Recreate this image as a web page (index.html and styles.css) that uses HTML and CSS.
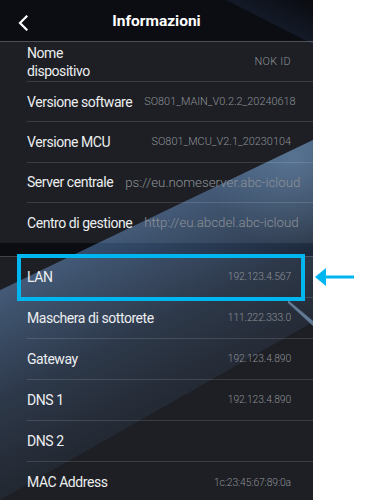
FILE: index.html
```html
<!DOCTYPE html>
<html lang="it">
<head>
    <meta charset="UTF-8">
    <meta name="viewport" content="width=device-width, initial-scale=1.0">
    <title>Informazioni</title>
    <link rel="stylesheet" href="styles.css">
</head>
<body>
    <div class="screen">
        <header class="topbar">
            <svg class="back" width="10" height="16" viewBox="0 0 10 16" aria-hidden="true">
                <polyline points="8.5,1.5 2,8 8.5,14.5" fill="none" stroke="#fff" stroke-width="2.2" stroke-linecap="square"/>
            </svg>
            <h1>Informazioni</h1>
        </header>

        <section class="group">
            <div class="row">
                <span class="label">Nome<br>dispositivo</span>
                <span class="value value-wide">NOK ID</span>
            </div>
            <div class="row">
                <span class="label">Versione software</span>
                <span class="value">SO801_MAIN_V0.2.2_20240618</span>
            </div>
            <div class="row">
                <span class="label">Versione MCU</span>
                <span class="value">SO801_MCU_V2.1_20230104</span>
            </div>
            <div class="row">
                <span class="label">Server centrale</span>
                <span class="value value-url">ps://eu.nomeserver.abc-icloud</span>
            </div>
            <div class="row">
                <span class="label">Centro di gestione</span>
                <span class="value value-url">http://eu.abcdel.abc-icloud</span>
            </div>
        </section>

        <section class="group group-net">
            <div class="row highlight">
                <span class="label">LAN</span>
                <span class="value value-ip">192.123.4.567</span>
                <svg class="pointer" width="40" height="18" viewBox="0 0 40 18" aria-hidden="true">
                    <polygon points="0,9 11,0 11,18" fill="#00b6f0"/>
                    <rect x="10" y="7.5" width="29" height="3" fill="#00b6f0"/>
                </svg>
            </div>
            <div class="row">
                <span class="label">Maschera di sottorete</span>
                <span class="value value-ip">111.222.333.0</span>
            </div>
            <div class="row">
                <span class="label">Gateway</span>
                <span class="value value-ip">192.123.4.890</span>
            </div>
            <div class="row">
                <span class="label">DNS 1</span>
                <span class="value value-ip">192.123.4.890</span>
            </div>
            <div class="row">
                <span class="label">DNS 2</span>
                <span class="value"></span>
            </div>
            <div class="row">
                <span class="label">MAC Address</span>
                <span class="value value-ip">1c:23:45:67:89:0a</span>
            </div>
        </section>
    </div>
</body>
</html>
```

FILE: styles.css
```css
:root {
    --label-color: #eceef0;
    --value-color: #8d9197;
    --line-color: rgba(255, 255, 255, 0.13);
    --accent: #00b6f0;
}

body {
    margin: 0;
    background-color: #ffffff;
    font-family: 'Roboto', 'Noto Sans', sans-serif;
}

.screen {
    position: relative;
    width: 313px;
    height: 500px;
    background:
        linear-gradient(27deg, transparent 93.2%, rgba(34, 50, 76, 0.35) 93.4%, transparent 99%),
        #0b0d13;
}

/* light plane of the wallpaper */
.screen::before {
    content: "";
    position: absolute;
    inset: 0;
    clip-path: polygon(0 290px, 313px 140px, 313px 322px, 0 500px);
    background:
        radial-gradient(circle at 295px 160px, rgba(120, 160, 200, 0.35), transparent 90px),
        linear-gradient(154deg, transparent 44%, rgba(66, 98, 138, 0.75) 44.6%, rgba(42, 62, 90, 0.55) 62%, rgba(20, 26, 36, 0.2) 82%);
}

.screen::after {
    content: "";
    position: absolute;
    inset: 0;
    clip-path: polygon(288px 300px, 313px 321px, 313px 326px, 288px 303px);
    background: rgba(140, 180, 220, 0.55);
}

.topbar {
    position: relative;
    z-index: 1;
    height: 41px;
    border-bottom: 1px solid rgba(255, 255, 255, 0.28);
    display: flex;
    align-items: center;
    justify-content: center;
}

.back {
    position: absolute;
    left: 18px;
    top: 15px;
}

.topbar h1 {
    margin: 0;
    color: #ffffff;
    font-size: 15.5px;
    font-weight: 700;
}

.group {
    position: relative;
    z-index: 1;
    background-color: rgba(255, 255, 255, 0.075);
}

.group-net {
    margin-top: 13px;
    border-top: 1px solid rgba(255, 255, 255, 0.16);
}

.row {
    position: relative;
    box-sizing: border-box;
    height: 40.2px;
    margin-left: 27px;
    padding-right: 22px;
    display: flex;
    align-items: center;
    justify-content: space-between;
    gap: 12px;
    border-bottom: 1px solid var(--line-color);
}

.row:last-child {
    border-bottom: none;
}

.group-net .row {
    height: 41px;
}

.label {
    color: var(--label-color);
    font-size: 14px;
    line-height: 18px;
    white-space: nowrap;
    letter-spacing: -0.45px;
}

.value {
    color: var(--value-color);
    font-size: 10.9px;
    font-weight: 300;
    white-space: nowrap;
}

.value-wide {
    letter-spacing: 0.3px;
}

.value-url {
    font-size: 13.3px;
}

.value-ip {
    font-size: 10.3px;
    letter-spacing: -0.1px;
}

.highlight::after {
    content: "";
    position: absolute;
    top: -3px;
    bottom: -4px;
    left: -10px;
    right: 8px;
    border: 4px solid var(--accent);
}

.pointer {
    position: absolute;
    left: calc(100% + 2px);
    top: 11px;
}
```
